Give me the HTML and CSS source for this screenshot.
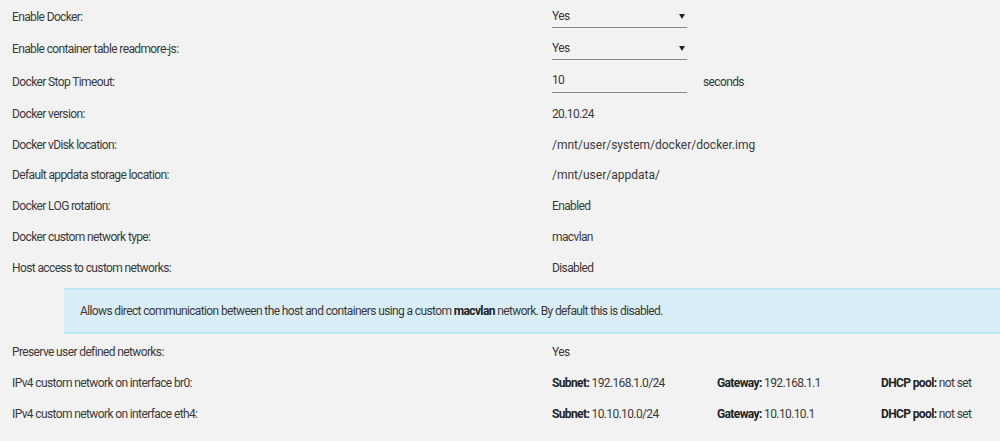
FILE: index.html
```html
<!DOCTYPE html>
<html>
<head>
<meta charset="utf-8">
<link rel="stylesheet" href="styles.css">
</head>
<body>
<div class="settings">
  <div class="row row-ctl"><div class="label">Enable Docker:</div><div class="value"><span class="select-wrap"><select class="sel"><option>Yes</option><option>No</option></select></span></div></div>
  <div class="row row-ctl"><div class="label">Enable container table readmore-js:</div><div class="value"><span class="select-wrap"><select class="sel"><option>Yes</option><option>No</option></select></span></div></div>
  <div class="row row-ctl3"><div class="label">Docker Stop Timeout:</div><div class="value"><input class="num" type="text" value="10"><span class="unit">seconds</span></div></div>
  <div class="row"><div class="label">Docker version:</div><div class="value">20.10.24</div></div>
  <div class="row"><div class="label">Docker vDisk location:</div><div class="value path">/mnt/user/system/docker/docker.img</div></div>
  <div class="row row-short"><div class="label">Default appdata storage location:</div><div class="value path">/mnt/user/appdata/</div></div>
  <div class="row"><div class="label">Docker LOG rotation:</div><div class="value">Enabled</div></div>
  <div class="row"><div class="label">Docker custom network type:</div><div class="value">macvlan</div></div>
  <div class="row"><div class="label">Host access to custom networks:</div><div class="value">Disabled</div></div>
  <div class="info"><p class="info-text">Allows direct communication between the host and containers using a custom <b>macvlan</b> network. By default this is disabled.</p></div>
  <div class="row"><div class="label">Preserve user defined networks:</div><div class="value">Yes</div></div>
  <div class="row"><div class="label">IPv4 custom network on interface br0:</div><div class="value net"><span class="c1"><b>Subnet:</b> 192.168.1.0/24</span><span class="c2"><b>Gateway:</b> 192.168.1.1</span><span class="c3"><b>DHCP pool:</b> not set</span></div></div>
  <div class="row"><div class="label">IPv4 custom network on interface eth4:</div><div class="value net"><span class="c1"><b>Subnet:</b> 10.10.10.0/24</span><span class="c2"><b>Gateway:</b> 10.10.10.1</span><span class="c3"><b>DHCP pool:</b> not set</span></div></div>
</div>
</body>
</html>
```
FILE: styles.css
```css
html, body {
  margin: 0;
  padding: 0;
  background: #f2f2f2;
}
body {
  font-family: Roboto, "Liberation Sans", sans-serif;
  font-size: 12px;
  letter-spacing: -0.62px;
  color: #3a3a3a;
  width: 1000px;
  height: 441px;
  overflow: hidden;
}
.settings {
  display: flex;
  flex-direction: column;
  padding-top: 1px;
}
.row {
  display: grid;
  grid-template-columns: 552px 1fr;
  height: 31px;
  align-items: center;
}
.row-ctl { height: 32px; }
.row-ctl3 { height: 33px; }
.row-short { height: 30px; }
.label {
  padding-left: 12px;
}
.value {
  display: flex;
  align-items: center;
}
.path {
  letter-spacing: 0;
}
.select-wrap {
  position: relative;
  display: inline-block;
  width: 135px;
}
.sel {
  appearance: none;
  -webkit-appearance: none;
  width: 135px;
  height: 22px;
  margin: 0;
  padding: 0 0 2px 0;
  border: none;
  border-bottom: 1px solid #8a8a8a;
  background: transparent;
  font: inherit;
  letter-spacing: inherit;
  color: #3a3a3a;
  outline: none;
}
.select-wrap::after {
  content: "";
  position: absolute;
  right: 2px;
  top: 8px;
  border-left: 3px solid transparent;
  border-right: 3px solid transparent;
  border-top: 5px solid #222;
}
.num {
  width: 135px;
  height: 22px;
  box-sizing: border-box;
  margin: 0;
  padding: 0 0 2px 0;
  border: none;
  border-bottom: 1px solid #8a8a8a;
  background: transparent;
  font: inherit;
  letter-spacing: inherit;
  color: #3a3a3a;
  outline: none;
}
.unit {
  margin-left: 16px;
}
.info {
  margin: 5px 0 2px 64px;
  height: 42px;
  display: flex;
  align-items: center;
  padding-left: 16px;
  background: #d9edf7;
  border-top: 2px solid #bce8f1;
  border-bottom: 2px solid #bce8f1;
  color: #3a3a3a;
}
.info-text { margin: 0; }
.info b { color: #222; }
.net b { color: #222; }
.c1 { width: 165px; }
.c2 { width: 164px; }
.c3 { width: 119px; }
```
